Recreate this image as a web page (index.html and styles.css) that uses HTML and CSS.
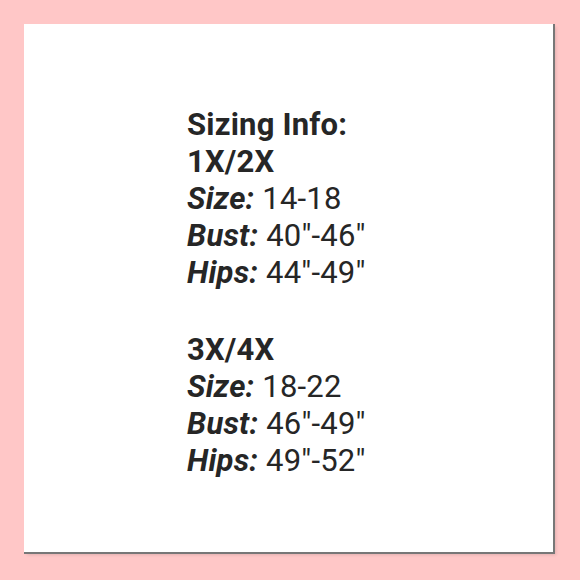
FILE: index.html
```html
<!DOCTYPE html>
<html>
<head>
<meta charset="utf-8">
<link rel="stylesheet" href="styles.css">
</head>
<body>
<div class="card">
  <div class="info">
    <p class="line"><b>Sizing Info:</b></p>
    <p class="line"><b>1X/2X</b></p>
    <p class="line"><b><i>Size:</i></b> 14-18</p>
    <p class="line"><b><i>Bust:</i></b> 40"-46"</p>
    <p class="line"><b><i>Hips:</i></b> 44"-49"</p>
    <p class="line blank">&nbsp;</p>
    <p class="line"><b>3X/4X</b></p>
    <p class="line"><b><i>Size:</i></b> 18-22</p>
    <p class="line"><b><i>Bust:</i></b> 46"-49"</p>
    <p class="line"><b><i>Hips:</i></b> 49"-52"</p>
  </div>
</div>
</body>
</html>
```
FILE: styles.css
```css
html, body {
  margin: 0;
  padding: 0;
}
body {
  width: 580px;
  height: 580px;
  background: #ffc7c7;
  padding: 24px 27px 26px 24px;
  box-sizing: border-box;
}
.card {
  width: 529px;
  height: 528px;
  background: #ffffff;
  box-shadow: 1px 1px 0 1px #777, 3px 3px 3px rgba(0,0,0,0.12);
  box-sizing: border-box;
  padding: 82px 0 0 163px;
  font-family: Roboto, "Liberation Sans", sans-serif;
  color: #262626;
  font-size: 31px;
  letter-spacing: 0.2px;
}
.line {
  margin: 0;
  line-height: 37px;
  white-space: nowrap;
}
.blank {
  height: 40px;
}
```
